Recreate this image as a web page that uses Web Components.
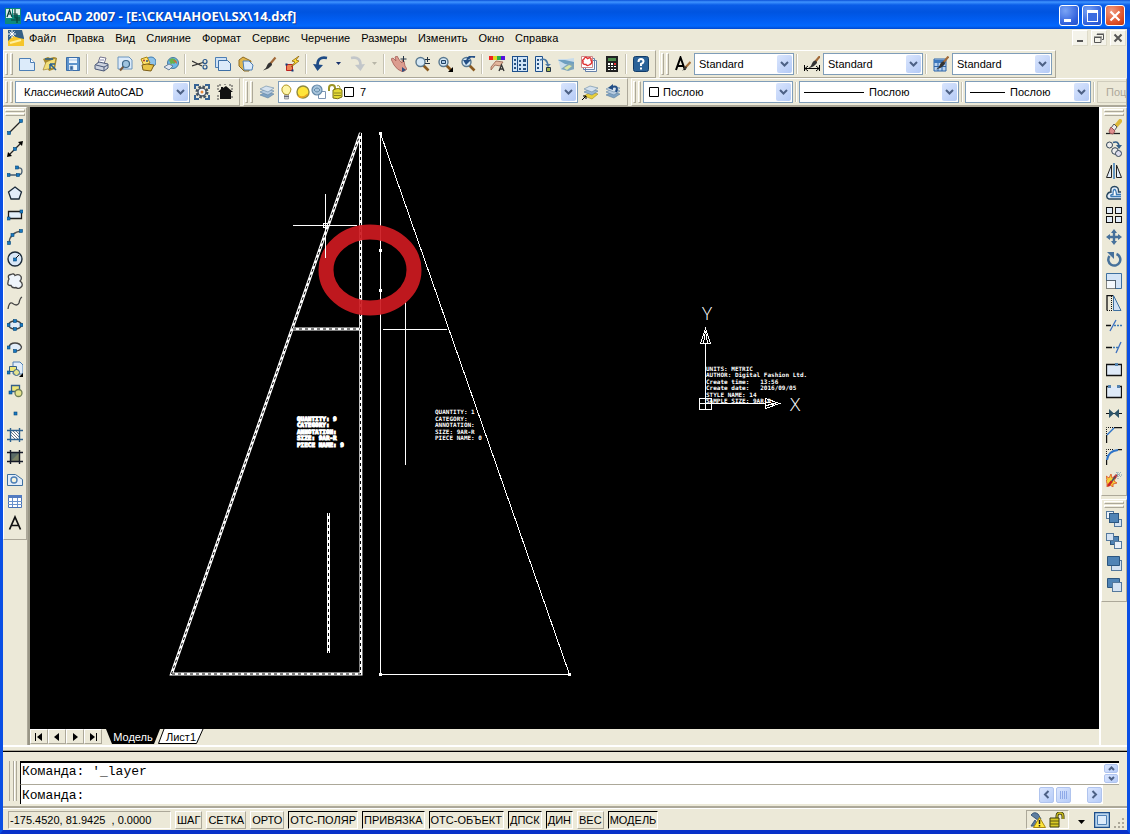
<!DOCTYPE html>
<html lang="ru">
<head>
<meta charset="utf-8">
<title>AutoCAD 2007 - [E:\СКАЧАНОЕ\LSX\14.dxf]</title>
<style>
  body { margin: 0; font: 11px/14px "Liberation Sans", Arial, sans-serif; color: #000; }
</style>
</head>
<body>
<cad-window></cad-window>
<script>
/* 16x16 icon artwork */
const dot = (x, y) => `<rect x="${x}" y="${y}" width="3" height="3" fill="#1878c0" stroke="#084878" stroke-width=".6"/>`;
const sq = (x, y, s, f, k) => `<rect x="${x}" y="${y}" width="${s}" height="${s}" fill="${f}" stroke="${k}"/>`;
const LENS = '<path d="M9 9l5.500 5.500" stroke="#8a5a20" stroke-width="2.600"/><circle cx="6.500" cy="6" r="4.500" fill="#d5e8f5" stroke="#59788f" stroke-width="1.400"/>';
const BRUSH = '<path d="M14.500 1.500L9 8" stroke="#a26a3a" stroke-width="2.200"/><path d="M9.500 6.500q2 1 1.500 2.500-3 4-9 5.500 4-3 4.500-6 1-2 3-2z" fill="#333"/>';
const LAYERS = '<path d="M1 11l6-3 8 2-6 4z" fill="#7fa3c4" stroke="#5c7fa0" stroke-width=".6"/><path d="M1 8l6-3 8 2-6 4z" fill="#b6cbe0" stroke="#5c7fa0" stroke-width=".6"/><path d="M1 5l6-3 8 2-6 4z" fill="#d5e2ee" stroke="#6586a4" stroke-width=".6"/>';
const GRID = (f) => `<path d="M3.500 1v14M12.500 1v14M0 3.500h16M0 12.500h16" stroke="${f}" stroke-width="1.400"/>`;
const ICONS = {
  app: '<path d="M0 0h16v16H0z" fill="#0d8a7c"/><path d="M1 1h6v9H1zM8 1h7v6H8z" fill="#fff" opacity=".85"/><path d="M2 9l2.500-7L7 9M3 6h3M10 1v9h5M8 6h4v7M6 12h9M12 9v6" stroke="#073f3a" stroke-width="1.200" fill="none"/>',
  doc: '<path d="M0 0h14l2 8v7H0z" fill="#335f86"/><path d="M0 11l5-5 6 2 5 1v7H0z" fill="#f5c52a"/><path d="M2 13l11-3" stroke="#fff0a0" stroke-width="2"/><path d="M4 0v8M0 4h8M1.500 1.500l5 5M6.500 1.500l-5 5" stroke="#fff"/>',
  new: '<path d="M.5 2.500h11l4 4v8h-15z" fill="#dcebfa" stroke="#4d7fb5"/><path d="M11.500 2.500v4h4" fill="#fff" stroke="#4d7fb5"/>',
  open: '<path d="M1 3l5-2 2 1 4-1 3 1-2 11-6 2z" fill="#a78a2b"/><path d="M1 14L4 6l10-4-2 10z" fill="#f2df79" stroke="#94762a" stroke-width=".6"/><path d="M3 3h8M8 8l6 6M8 8h5M8 8v5" stroke="#286090" stroke-width="1.500" fill="none"/>',
  save: '<path d="M1.500 1.500h13v13h-13z" fill="#5e94cd" stroke="#3c6ea8"/><path d="M4 2h8v5H4zM4 9h8v5H4z" fill="#eef5fc"/><path d="M4 4h8M5 10h3v4H5z" fill="#38669c" stroke="#8cb2dc" stroke-width=".7"/>',
  print: '<path d="M4 7l2-6 6 1-2 6z" fill="#fff" stroke="#557" stroke-width=".8"/><path d="M1 9l4-3 9 2v4l-4 3-9-2z" fill="#cdd3de" stroke="#4a5878"/><path d="M2 9l8 2 4-2M10 11v4" stroke="#4a5878" fill="none"/><path d="M6 4h4" stroke="#88a"/>',
  preview: '<path d="M1 1h11l3 3v9H1z" fill="#dcebfa" stroke="#6b94bd"/><path d="M7 10l-4 4.500" stroke="#7c5a3a" stroke-width="2"/><circle cx="9" cy="8" r="3.500" fill="#9fc4e0" stroke="#3d6788" stroke-width="1.200"/>',
  publish: '<circle cx="11" cy="6" r="5" fill="#8fc3ea" stroke="#3c7bb0"/><path d="M1 3l6-2 3 6-6 3z" fill="#ffe36b" stroke="#a98312"/><path d="M2 9l5-1 7 1-3 6-8-1z" fill="#e8c447" stroke="#7b5d16"/><circle cx="4" cy="4.500" r="1" fill="#a33"/><circle cx="7" cy="5" r="1" fill="#357"/>',
  web: '<circle cx="10" cy="7" r="5.500" fill="#6db7e6" stroke="#477aa2"/><path d="M6 4q4-4 8 1l-3 3q-2-2-3 1z" fill="#6ab04a"/><path d="M10 4q4 0 4 4l-2-2z" fill="#e05a3a"/><path d="M1 11l5-3 4 2-4 4z" fill="#dfe5ee" stroke="#67809b"/>',
  cut: '<path d="M0 5l10 5M0 10L11 6.500" stroke="#333" stroke-width="1.200"/><circle cx="13" cy="5.500" r="2" fill="none" stroke="#27558c" stroke-width="1.200"/><circle cx="13" cy="11" r="2" fill="none" stroke="#27558c" stroke-width="1.200"/>',
  copy: '<path d="M.5 1.500h11v10H.5z" fill="#cfe2f5" stroke="#4d7fb5"/><path d="M3.500 4.500h9l3 3v7h-12z" fill="#dcebfa" stroke="#3d6fa5"/>',
  paste: '<path d="M1 4l4-3 8 4-2 10-5 0-5-5z" fill="#e1b64c" stroke="#8e6a20"/><path d="M5 5h6l4 4-1 5H6z" fill="#dcebfa" stroke="#4d7fb5"/>',
  brush: BRUSH,
  block: '<path d="M2.500 8.500h6v6h-6z" fill="#ee8450" stroke="#b22"/><path d="M1.500 7.500h2v2h-2zM7.500 13.500h2v2h-2z" fill="#123a7a"/><path d="M15 0L8 5l3 1-4 5 8-6-3-1z" fill="#ffe033" stroke="#91650c" stroke-width=".8"/>',
  undo: '<path d="M14 2Q4 0 4.500 10" fill="none" stroke="#1e4b85" stroke-width="2.600"/><path d="M0 8l4.500 7L10 9z" fill="#1e4b85"/>',
  redo: '<path d="M2 2q10-2 9.500 8" fill="none" stroke="#c2c6c9" stroke-width="2.600"/><path d="M16 8l-4.500 7L6 9z" fill="#c2c6c9"/>',
  pan: '<path d="M0 3l2-1 3 3-1-4 2-1 3 5 2 2v-3l2 1 1 5 2 3-4 3q-6-2-9-7z" fill="#dc9c8f" stroke="#a35c54" stroke-width=".8"/><path d="M11 11l4 3-4 2z" fill="#304f80"/><path d="M12.500 0v6M9.500 3h6" stroke="#234"/>',
  zoom: LENS + '<path d="M13.500 1v5M11 3.500h5M11 7.500h5" stroke="#234"/>',
  zoomwin: LENS + '<path d="M4.500 4.500h4v3h-4z" fill="#aecce8" stroke="#246"/><path d="M16 11v5h-5z"/>',
  zoomprev: LENS + '<path d="M15 1Q8-1 7 5" stroke="#234f86" stroke-width="2" fill="none"/><path d="M3 4h8L6 9z" fill="#234f86"/>',
  props: '<path d="M0 0h4v4H0z" fill="#e22"/><path d="M4 0h4v4H4z" fill="#e0d622"/><path d="M8 0h4v4H8z" fill="#2bb04a"/><path d="M12 0h4v4h-4z" fill="#51d"/><path d="M2 11l5-6 7 1-3 4-5-1-4 5z" fill="#e3b79e" stroke="#955f4c" stroke-width=".8"/><path d="M10 15l2.500-6L15 15M11 13h3" stroke="#333" stroke-width="1.300" fill="none"/>',
  dc: '<rect x=".5" y=".5" width="15" height="15" fill="#cfe3f6" stroke="#1d4f8b"/><path d="M5.500 1v14" stroke="#1d4f8b"/><path d="M7 4h2v2H7zM11 3h3v3h-3zM7 8h2v2H7zM11 8h3v2h-3zM7 12h2v2H7zM11 12h3v2h-3zM2 3h2v2H2zM2 7h2v2H2zM2 11h2v2H2z" fill="#28517f"/>',
  palette: '<path d="M.5 .5h7v15h-7z" fill="#dcebfa" stroke="#1d4f8b"/><path d="M2 3h2v2H2zM2 7h2v2H2zM2 11h2v2H2z" fill="#28517f"/><path d="M5 4q7-3 8 6" fill="none" stroke="#4b79a5" stroke-width="1.600"/><path d="M10 8h6l-3 3z" fill="#4b79a5"/><path d="M11.500 11.500h4v4h-4z" fill="#9fb24f" stroke="#234"/>',
  sheet: '<path d="M0 3h9l7-1v12H3z" fill="#c8dcea"/><path d="M0 4h7l9 2v3L7 8z" fill="#6d9fc0"/><path d="M3 13l8-6 5 1v5l-6 2z" fill="#80a6b8"/><path d="M6 12l5-3 3 1-5 4z" fill="#dbe7a4"/>',
  markup: '<path d="M4.500 4.500h11v11h-11zM2.500 2.500h11v11h-11z" fill="#f6fbff" stroke="#6580a8"/><path d="M.5 .5h11v11H.5z" fill="#fff" stroke="#c88"/><path d="M3 3q1-3 3.500-.5 4-2 3.500 1.500 2 3-1 4.500-3 2-4 0-4 0-3-3-1-1 1-2.500z" fill="none" stroke="#e03030" stroke-width="1.500"/>',
  calc: '<path d="M2 0h12v16H2z" fill="#222"/><path d="M4 2h8v3H4z" fill="#4c8c4c"/><path d="M10 7h2v2h-2z" fill="#e33"/><path d="M4 7h2v2H4zM7 7h2v2H7zM4 10h2v1H4zM7 10h2v1H7zM10 10h2v1h-2zM4 13h2v1H4zM7 13h2v1H7zM10 13h2v1h-2z" fill="#fff"/>',
  help: '<rect x=".5" y=".5" width="15" height="15" rx="2" fill="#2b6298" stroke="#123c68"/><path d="M5.500 6q0-3 2.500-3t2.500 2.500Q10.500 7 8 8v2M8 11.500v2" fill="none" stroke="#fff" stroke-width="2"/>',
  tstyle: '<path d="M1 14L5.500 1.500 10 14M2.500 10h6" fill="none" stroke="#000" stroke-width="2"/><path d="M15.500 6L10 12" stroke="#a5713c" stroke-width="2.200"/><path d="M11 10l1 2-5 3z" fill="#333"/>',
  dstyle: '<path d="M.5 9v6M15.500 9v6M1 12.500h14M4 10l-3 2.500L4 15M12 10l3 2.500-3 2.500" fill="none" stroke="#000"/><g transform="translate(2 -2)">' + BRUSH + '</g>',
  tabstyle: '<path d="M1 3h12v12H1z" fill="#b8d2f0" stroke="#2d64a8"/><path d="M1 4h12v3H1z" fill="#3c78be"/><path d="M1 10.500h12M5 7v8M9 7v8" stroke="#2d64a8"/><g transform="translate(1 -1)">' + BRUSH + '</g>',
  gear: '<path d="M0 0h5v2H2v3H0zM11 0h5v5h-2V2h-3zM0 11h2v3h3v2H0zM14 11h2v5h-5v-2h3z" fill="#386494"/><circle cx="8" cy="8" r="5" fill="none" stroke="#45525f" stroke-width="3" stroke-dasharray="2.400 1.500"/><circle cx="8" cy="8" r="4" fill="#eef3f8" stroke="#45525f" stroke-width="1.400"/><circle cx="8" cy="8" r="1.500" fill="#e8893a"/>',
  home: '<path d="M1 8l3-3V3h2v1l3-2 7 6h-2v7H3V8z" fill="#111"/><path d="M0 2h2M0 5h2M0 12h2M0 15h2M14 2h2M14 5h2M14 13h2M3 0v2M8 0v1M13 0v2" stroke="#444"/>',
  layers: LAYERS,
  layerset: '<path d="M2 12l7-4 7 2-6 5z" fill="#e8cf3a" stroke="#a68d14" stroke-width=".6"/><path d="M2 8l6-3 8 2-6 4z" fill="#9bb8d4" stroke="#5c7fa0" stroke-width=".6"/><path d="M2 5l6-3 8 2-6 4z" fill="#d5e2ee" stroke="#6586a4" stroke-width=".6"/><path d="M0 16l4-4M1 12h3v3" stroke="#000" fill="none"/>',
  layerprev: LAYERS + '<path d="M11 8q3-7-4-5" stroke="#234f86" stroke-width="2" fill="none"/><path d="M8 0v6L3 4z" fill="#234f86"/>',
  bulb: '<path d="M5 10Q2 7 3 4q2-4 5-3t4 4q0 3-3 6z" fill="#fff6a6" stroke="#b29626"/><path d="M5.500 11h4v4h-4z" fill="#c9ccd2" stroke="#777" stroke-width=".6"/><path d="M5 12.500h5" stroke="#667"/>',
  sun: '<circle cx="8" cy="8" r="6" fill="#ffe53a" stroke="#8f8a3f" stroke-width="1.400"/><path d="M3 12q5 3 10-2" fill="none" stroke="#e8a51f" stroke-width="1.500"/>',
  vpfreeze: '<path d="M7.500 7.500h7v7h-7z" fill="#fff" stroke="#7d95b3"/><circle cx="6" cy="6" r="5" fill="#a7c4dc" stroke="#6489a8" stroke-width="1.200"/><path d="M3 6q3-4 6 0-3 4-6 0z" stroke="#557f9e" stroke-width=".8" fill="none"/>',
  lock: '<path d="M2 7V4q0-3 3-3t3 3v3" fill="none" stroke="#9c9424" stroke-width="2"/><path d="M6 6q6-3 9 0v7q-4 3-9 1z" fill="#e4da36" stroke="#777015"/><path d="M7 9h7M7 11.500h7" stroke="#8c8420"/><path d="M10 2q3-2 3 4" fill="none" stroke="#9c9424"/>',
  swatch: '<path d="M1.500 3.500h9v9h-9z" fill="#fff" stroke="#000"/>',
  line: '<path d="M2 14L14 2" stroke="#222" stroke-width="1.300"/>' + dot(.5, 12.500) + dot(12.500, .5),
  xline: '<path d="M2 14L14 2" stroke="#222" stroke-width="1.300"/><path d="M0 16l1-5 4 4zM16 0l-5 1 4 4z"/>' + dot(6.500, 6.500),
  pline: '<path d="M1 12h10q4 0 4-4t-5-3" fill="none" stroke="#445b70" stroke-width="1.300"/>' + dot(0, 10.500) + dot(9.500, 10.500) + dot(8.500, 3),
  polygon: '<path d="M8 2l6.500 5-2.500 7H4L1.500 7z" fill="#e2edf9" stroke="#1c2b3a" stroke-width="1.300"/>',
  rect: '<path d="M1.500 4.500h13v7h-13z" fill="#e2edf9" stroke="#1c1c1c" stroke-width="1.300"/>' + dot(0, 10) + dot(13, 3),
  arc: '<path d="M2 14Q3 3 15 2" fill="none" stroke="#555" stroke-width="1.300"/>' + dot(.5, 12.500) + dot(4, 4.500) + dot(12.500, .5),
  circle: '<circle cx="8" cy="8" r="7" fill="#d8e7f7" stroke="#1c2b3a" stroke-width="1.400"/><path d="M8 8l4-4" stroke="#111"/>' + dot(6.500, 7),
  cloud: '<path d="M2 6Q0 2 4 1.500 7 0 8 2.500q4-2 6 1 1 3-1 4.500 3 2 2 5-3 4-6 1.500-4 1-5-2-4 0-3-3 0-2 1-3.500z" fill="#eff5fb" stroke="#444" stroke-width="1.300"/>',
  spline: '<path d="M1 14q1-7 4-6 5 4 7 0 1-5 3-6" fill="none" stroke="#444" stroke-width="1.300"/>',
  ellipse: '<ellipse cx="8" cy="8" rx="6.500" ry="4" fill="#e2edf9" stroke="#444" stroke-width="1.300"/>' + dot(0, 6.500) + dot(13, 6.500) + dot(6.500, 2.500) + dot(6.500, 10.500),
  earc: '<path d="M2 8q1-4 6-4t6.500 4Q14 12 8 12" fill="#e2edf9" stroke="#444" stroke-width="1.300"/>' + dot(0, 7) + dot(6.500, 10.500),
  insert: '<path d="M6 1h7l3 3v9H6z" fill="#e2edf9" stroke="#4d7fb5"/><path d="M2.500 5.500h7v5h-7z" fill="#eee678" stroke="#355f88"/><circle cx="9.500" cy="11.500" r="3" fill="#e4e28c" stroke="#355f88"/>' + dot(0, 10) + '<path d="M16 12v4h-4z"/>',
  mkblock: '<path d="M4.500 2.500h8v6h-8z" fill="#eee678" stroke="#355f88" stroke-width="1.300"/><circle cx="11.500" cy="10" r="3.500" fill="#e4e28c" stroke="#6f7e55" stroke-width="1.300"/>' + dot(2, 8),
  point: dot(7, 7),
  hatch: '<path d="M4 4h8v8H4z" fill="#fff"/><path d="M4 5l7 7M4 8l4 4M6 4l6 6M9 4l3 3" stroke="#456" stroke-width=".8"/>' + GRID('#2c618f'),
  gradient: '<path d="M4 4h8v8H4z" fill="#5a6a66"/><path d="M4 12l8-8v8z" fill="#7c8265"/>' + GRID('#151a28'),
  region: '<path d="M.5 3.500h8l7 5v6H.5z" fill="#e2edf9" stroke="#3d6f9f"/><circle cx="7" cy="9" r="3" fill="#f5f3dd" stroke="#4d7fb5" stroke-width="1.400"/>',
  table: '<path d="M1.500 2.500h13v12h-13z" fill="#fff" stroke="#4a73b5"/><path d="M1 2h14v3H1z" fill="#527bc0"/><path d="M1 8.500h14M1 11.500h14M5.500 5v9M10.500 5v9" stroke="#6a92cc"/>',
  mtext: '<path d="M2.500 14.500L8 2l5.500 12.500M4.500 10.500h7" fill="none" stroke="#111" stroke-width="1.700"/>',
  erase: '<path d="M0 14.500h14" stroke="#222" stroke-width="1.300"/><path d="M15.500 .5L10 7" stroke="#dcb83a" stroke-width="4"/><path d="M5 9l3-4 3 3-3 4z" fill="#eee" stroke="#555"/><path d="M3 12l2-4 4 4-2 3q-4 0-4-3z" fill="#e08e8e" stroke="#955"/>',
  dup: '<circle cx="3.500" cy="4" r="3" fill="#eee" stroke="#345"/><circle cx="9" cy="10" r="3.300" fill="#eee" stroke="#345"/><circle cx="12.500" cy="12.500" r="3" fill="#dde" stroke="#345"/><path d="M7 1.500q5-2 6 3" fill="none" stroke="#345f88" stroke-width="1.600"/><path d="M10 4h6l-3 4z" fill="#345f88"/>',
  mirror: '<path d="M5.500 2v12.500h-5zM10.500 2v12.500h5z" fill="#e2edf9" stroke="#222"/><path d="M8 0v16" stroke="#2e74b8" stroke-width="1.400"/>',
  offset: '<path d="M15 14H3q-3-1-2-4t4-3Q4 1.500 8.500 1.500T12.500 7H15" fill="#e2edf9" stroke="#27465f" stroke-width="1.400"/><path d="M15 11.500H5q-1-2 2-2 0-5 1.500-5T10.500 9.500H15" fill="#fff" stroke="#3b7ab5" stroke-width="1.300"/>',
  array: sq(.5, .5, 6, '#e2edf9', '#111') + sq(9.500, .5, 6, '#e2edf9', '#111') + sq(.5, 9.500, 6, '#e2edf9', '#111') + sq(9.500, 9.500, 6, '#e2edf9', '#111'),
  move: '<path d="M8 2v12M2 8h12" stroke="#47719b" stroke-width="2.400"/><path d="M8 0l3 4H5zM8 16l3-4H5zM0 8l4-3v6zM16 8l-4-3v6z" fill="#47719b"/>',
  rotate: '<path d="M10.500 3a6 6 0 1 1-7 2" fill="none" stroke="#47719b" stroke-width="2.500"/><path d="M1 1h7v7z" fill="#47719b"/>',
  scale: '<path d="M.5 .5h15v15H9.500v-8h-9z" fill="#d4e4f6" stroke="#3d6f9f"/><path d="M.5 7.500h9v8h-9z" fill="#f4f8fc" stroke="#111" stroke-dasharray="1 1"/>',
  stretch: '<path d="M7.500 .5l7.500 15H7.500z" fill="#cfe0f4" stroke="#3d6f9f"/><path d="M1 15.500V.5h6" fill="none" stroke="#111" stroke-width="1.300"/><path d="M5.500 1v14M1 15.500h6" stroke="#111" stroke-dasharray="1 1"/>',
  trim: '<path d="M0 8.500h5" stroke="#111" stroke-width="1.500"/><path d="M8 8.500h8" stroke="#3b7ab5" stroke-dasharray="2 1" stroke-width="1.300"/><path d="M4 14L10 3" stroke="#3b6fc0" stroke-width="1.300"/>',
  extend: '<path d="M0 8.500h6" stroke="#111" stroke-width="1.500"/><path d="M7 8.500h5" stroke="#3b7ab5" stroke-dasharray="2 1" stroke-width="1.300"/><path d="M10 14l5-11" stroke="#3b6fc0" stroke-width="1.300"/>',
  breakpt: '<path d="M.5 3.500h15v11H.5z" fill="#dfeaf8" stroke="#111" stroke-width="1.300"/><path d="M9 2h3v3H9z" fill="#5584b0"/>',
  break: '<path d="M3 3.500H.5v11h15v-11H13" fill="#dfeaf8" stroke="#111" stroke-width="1.300"/><path d="M2 2h3v3H2zM11 2h3v3h-3z" fill="#5584b0"/>',
  join: '<path d="M0 8.500h16" stroke="#111"/><path d="M3 4l5 4.500L3 13zM13 4L8 8.500l5 4.500z" fill="#2d5468"/>',
  chamfer: '<path d="M.5 7V.5H8" fill="none" stroke="#111" stroke-dasharray="1 1"/><path d="M.5 16V8M8 .5h8" stroke="#111" stroke-width="1.400"/><path d="M1 8l7-7" stroke="#2e74c8" stroke-width="1.500"/>',
  fillet: '<path d="M.5 7V.5H8" fill="none" stroke="#111" stroke-dasharray="1 1"/><path d="M.5 16v-5M12 .5h4" stroke="#111" stroke-width="1.400"/><path d="M1 11Q2 2 12 1" fill="none" stroke="#2e74c8" stroke-width="2"/>',
  explode: '<path d="M0 5l3 2 2-4 1 4 4-1-2 4 3 2-4 1 0 3-3-2-3 2v-4l-1-2 1-1z" fill="#f4d13b" stroke="#d84a22" stroke-width=".8"/><path d="M2 15l4-5M8 7l3-3" stroke="#c22" stroke-width="2.600"/><path d="M6 10l3-4" stroke="#456" stroke-width="1.500"/><path d="M12 1v7M9 4h7M10 1l5 5M15 1l-5 5" stroke="#79a" stroke-dasharray="1 1"/>',
  front: sq(.5, .5, 7, '#eef4fb', '#54789c') + sq(8.500, 8.500, 7, '#d4e2f2', '#54789c') + sq(3.500, 2.500, 9, '#4f83b5', '#2c5680'),
  back: sq(4.500, 3.500, 8, '#4f83b5', '#2c5680') + sq(.5, .5, 7, '#d4e2f2', '#54789c') + sq(8.500, 8.500, 7, '#e8eff8', '#54789c'),
  above: sq(5.500, 5.500, 10, '#d4e2f2', '#54789c') + '<path d="M1.500 1.500h12v9h-12z" fill="#4f83b5" stroke="#2c5680"/>',
  under: '<path d="M1.500 1.500h12v9h-12z" fill="#4f83b5" stroke="#2c5680"/>' + sq(6.500, 5.500, 9, '#d4e2f2', '#54789c'),
  comm: '<path d="M1 3q3-4 7-1l3 5q-4 2-6-1zM5 8l-4 6h8z" fill="#5d7d9f" stroke="#3b5878"/><path d="M9.500 5.500l6 10h-12z" fill="#ffe638" stroke="#a98710"/><path d="M9.500 8v4M9.500 13v1.500" stroke="#222" stroke-width="1.500"/>',
  unlock: '<path d="M8 7V4q0-3 3-3t3 3v3" fill="none" stroke="#3a3a10" stroke-width="3"/><path d="M8 7V4q0-3 3-3t3 3v3" fill="none" stroke="#cfc020" stroke-width="1.300"/><path d="M1 6h9v9H1z" fill="#d9cb25" stroke="#3a3a10"/><path d="M1 9h9M1 12h9" stroke="#5c5610"/>',
  clean: '<path d="M.5 .5h15v15H.5z" fill="#b9d5ee" stroke="#1d4f8b" stroke-width="1.500"/><path d="M3.500 3.500h9v9h-9z" fill="#dcebfa" stroke="#4d7fb5"/>'
};

const CHEVRON = '<svg width="9" height="7" viewBox="0 0 9 7" aria-hidden="true"><path d="M1 1l3.500 3.500L8 1" fill="none" stroke="#4d6185" stroke-width="2"/></svg>';

class Part extends HTMLElement {
  connectedCallback() {
    if (this.shadowRoot) return;
    const t = document.createElement('template');
    t.innerHTML = '<style>*{box-sizing:border-box}</style>' + this.view();
    this.attachShadow({ mode: 'open' }).append(t.content.cloneNode(true));
  }
  at(name, other = '') { return this.getAttribute(name) ?? other; }
}
const define = (name, view) => customElements.define(name, class extends Part { view() { return view(this); } });

define('cad-icon', el => `
<style>:host{display:block;flex:none;width:16px;height:16px} svg{display:block}</style>
<svg width="16" height="16" viewBox="0 0 16 16" aria-hidden="true">${ICONS[el.at('name')]}</svg>`);

define('cad-tool', el => `
<style>
:host{display:block;flex:none}
button{display:grid;place-items:center;width:23px;height:22px;padding:0;border:0;background:none}
</style>
<button type="button" aria-label="${el.at('name')}"><cad-icon name="${el.at('name')}"></cad-icon></button>`);

define('cad-drop', el => `
<style>
:host{display:block;flex:none}
button{display:grid;place-items:center;width:13px;height:22px;padding:0 4px 2px;border:0;background:none;color:${el.at('tone', '#16306b')}}
</style>
<button type="button" aria-label="История"><svg width="5" height="3" viewBox="0 0 5 3"><path d="M0 0h5L2.500 3z" fill="currentColor"/></svg></button>`);

define('cad-sep', () => `
<style>:host{display:block;flex:none;width:2px;height:20px;margin:0 2px;border-left:1px solid #c5c2b2;border-right:1px solid #fff}</style>`);

/* A dockable toolbar: grip first, then whatever is slotted in. */
define('cad-band', el => {
  const v = el.hasAttribute('vertical');
  return `
<style>
:host{display:flex;flex:${el.hasAttribute('grow') ? '1' : 'none'};min-width:0;align-items:center;flex-direction:${v ? 'column' : 'row'};
 border:solid;border-width:1px;border-color:#fff #aca899 #aca899 #fff;padding:${v ? '0 0 5px' : el.hasAttribute('grow') ? '0' : '0 3px 0 0'};${v ? '' : 'height:28px;'}}
i{flex:none;display:block;${v ? 'width:20px;height:3px;margin:1px 0 0' : 'width:3px;height:22px;margin:0 1px'};border:1px solid;border-color:#fff #aca899 #aca899 #fff}
${v ? '' : 'i + i{margin-right:2px}'}
</style><i></i><i></i><slot></slot>`;
});

define('cad-select', el => `
<style>
:host{display:grid;flex:none;width:${el.at('w')}px;height:22px;border:1px solid #7f9db9;background:#fff;align-items:center}
select{grid-area:1/1;width:100%;height:20px;margin:0;padding:0 20px 0 ${el.at('pad', 4)}px;border:0;background:none;appearance:none;font:11px/14px "Liberation Sans",Arial,sans-serif;color:#000;border-radius:0}
.lead{grid-area:1/1;justify-self:start;display:flex;align-items:center;pointer-events:none}
.arrow{grid-area:1/1;justify-self:end;display:grid;place-items:center;width:15px;height:18px;margin-right:1px;pointer-events:none;border-radius:2px;background:linear-gradient(135deg,#d9e5fd,#b4caf6)}
</style>
<span class="lead"><slot></slot></span>
<select aria-label="${el.at('label')}"><option>${el.at('value')}</option></select>
<span class="arrow">${CHEVRON}</span>`);

define('cad-rule', el => `
<style>:host{display:block;width:${el.at('w')}px;height:1px;margin-left:4px;background:#000}</style>`);

define('cad-title', () => `
<style>
:host{display:flex;align-items:center;gap:3px;height:29px;padding:2px 5px 0 5px;
 background:linear-gradient(#0a50d8 0,#3f94ff 2px,#0a5de8 5px,#0054e0 12px,#0160f6 22px,#0268fd 26px,#0048cf 29px)}
h1{flex:1;min-width:0;margin:0;overflow:hidden;white-space:nowrap;color:#fff;font:bold 13px/18px "Open Sans","Noto Sans",sans-serif;text-shadow:1px 1px 0 #0b3a9a}
.buttons{display:flex;gap:3px}
button{display:grid;place-items:center;width:20px;height:21px;padding:0;border:1px solid #fff;border-radius:3px;background:radial-gradient(circle at 30% 25%,#7aa4f5,#3060dc 70%,#2450c8)}
button.close{background:radial-gradient(circle at 30% 25%,#f09a80,#dd4c22 70%,#b83410)}
</style>
<cad-icon name="app"></cad-icon>
<h1>AutoCAD 2007 - [E:\\СКАЧАНОЕ\\LSX\\14.dxf]</h1>
<div class="buttons">
<button type="button" aria-label="Свернуть"><svg width="14" height="14"><path d="M2 10h7v3H2z" fill="#fff"/></svg></button>
<button type="button" aria-label="Развернуть"><svg width="14" height="14"><path d="M2 1h11v12H2z" fill="#fff"/><path d="M3 4h9v8H3z" fill="#3c6ce0"/></svg></button>
<button type="button" class="close" aria-label="Закрыть"><svg width="14" height="14"><path d="M2.500 2.500l9 9M11.500 2.500l-9 9" stroke="#fff" stroke-width="2.200"/></svg></button>
</div>`);

define('cad-menu', () => `
<style>
:host{display:flex;align-items:center;height:21px;box-sizing:border-box;padding:0 1px 3px 5px;background:#ece9d8}
nav{display:flex;flex:1;min-width:0;overflow:hidden;gap:11px;padding-left:5px}
nav a{color:#000;text-decoration:none;white-space:nowrap;line-height:16px}
.mdi{display:flex;gap:3px}
button{display:grid;place-items:center;width:16px;height:16px;padding:0;border:1px solid;border-color:#fff #dedbc9 #dedbc9 #fff;background:#f4f3ea}
</style>
<cad-icon name="doc"></cad-icon>
<nav>${['Файл', 'Правка', 'Вид', 'Слияние', 'Формат', 'Сервис', 'Черчение', 'Размеры', 'Изменить', 'Окно', 'Справка'].map(t => `<a href="#">${t}</a>`).join('')}</nav>
<div class="mdi">
<button type="button" aria-label="Свернуть чертеж"><svg width="10" height="10"><path d="M2 7h6v2H2z" fill="#555"/></svg></button>
<button type="button" aria-label="Восстановить чертеж"><svg width="10" height="10" fill="none" stroke="#555"><path d="M3 2V1.500h6.500v5H8M3 1h7" /><path d="M.5 4.500H7v5H.5zM0 4h8"/></svg></button>
<button type="button" aria-label="Закрыть чертеж"><svg width="10" height="10"><path d="M1.500 1.500l7 7M8.500 1.500l-7 7" stroke="#555" stroke-width="2"/></svg></button>
</div>`);

const tools = s => s.split(' ').map(n => n === '|' ? '<cad-sep></cad-sep>' : n === 'v' ? '<cad-drop></cad-drop>' : n === 'w' ? '<cad-drop tone="#b8b6a8"></cad-drop>' : `<cad-tool name="${n}"></cad-tool>`).join('');

define('cad-toolbars', () => `
<style>
:host{display:block;background:#ece9d8;overflow:hidden}
.row{display:flex;overflow:hidden;gap:3px}
.color{flex:1 0 auto;height:22px;padding:0 0 0 8px;border:1px solid #d0cdbd;border-right:0;background:#ece9d8;color:#aca899;font:11px/14px "Liberation Sans",Arial,sans-serif;text-align:left}
</style>
<div class="row">
<cad-band>${tools('new open save | print preview publish web | cut copy paste brush block | undo v redo w | pan zoom zoomwin zoomprev | props dc palette sheet markup calc | help')}</cad-band>
<cad-band>${tools('tstyle')}<cad-select w="100" label="Текстовый стиль" value="Standard"></cad-select>
${tools('| dstyle')}<cad-select w="100" label="Размерный стиль" value="Standard"></cad-select>
${tools('| tabstyle')}<cad-select w="100" label="Стиль таблиц" value="Standard"></cad-select></cad-band>
</div>
<div class="row">
<cad-band><cad-select w="175" pad="8" label="Рабочее пространство" value="Классический AutoCAD"></cad-select>${tools('gear home')}</cad-band>
<cad-band>${tools('layers')}<cad-select w="300" pad="81" label="Слой" value="7"><cad-icon name="bulb"></cad-icon><cad-icon name="sun"></cad-icon><cad-icon name="vpfreeze"></cad-icon><cad-icon name="lock"></cad-icon><cad-icon name="swatch"></cad-icon></cad-select>${tools('layerset layerprev')}</cad-band>
<cad-band grow><cad-select w="150" pad="19" label="Цвет" value="Послою"><cad-icon name="swatch" style="margin-left:4px"></cad-icon></cad-select><cad-sep></cad-sep>
<cad-select w="160" pad="69" label="Тип линий" value="Послою"><cad-rule w="60"></cad-rule></cad-select><cad-sep></cad-sep>
<cad-select w="126" pad="44" label="Вес линий" value="Послою"><cad-rule w="35"></cad-rule></cad-select><cad-sep></cad-sep>
<button type="button" class="color" disabled>Поц</button></cad-band>
</div>`);

define('cad-drawing', () => {
  const lines = (x, ys, rows) => rows.map((t, i) => `<text x="${x}" y="${ys[i]}">${t}</text>`).join('');
  return `
<style>
:host{display:block;flex:1;min-width:0;background:#000;overflow:hidden;position:relative}
svg{position:absolute;inset:0;width:100%;height:100%}
.thin{fill:none;stroke:#fff;shape-rendering:crispEdges}
.fat{fill:none;stroke:#fff;stroke-width:3}
.dash{fill:none;stroke:#000;stroke-dasharray:3 3}
text{font:bold 6px "DejaVu Sans Mono","Liberation Mono",monospace;fill:#fff;white-space:pre}
.picked text{stroke:#fff;stroke-width:1px}
.axis{font:300 19px "Open Sans","Noto Sans",sans-serif}
</style>
<svg role="img" aria-label="Чертеж 14.dxf"><g transform="translate(-30 -107)">
<g class="fat"><path d="M360.500 133L171.500 674H361z"/><path d="M293 329h67M328.500 513v140"/></g>
<g class="dash"><path d="M360.500 133v541M360.500 133L171.500 674M172 674h189M293 329h67M328.500 513v140"/></g>
<g class="thin">
<path d="M380.500 133.500v541h189zM383 329.500h64M405.500 300v165"/>
<path d="M379.500 132.500h2v2h-2zM379.500 249.500h2v2h-2zM379.500 289.500h2v2h-2zM379.500 673.500h2v2h-2zM568.500 673.500h2v2h-2z"/>
<path d="M699.500 398.500h12v11h-12zM705.500 410v-67M699 403.500h67M700.500 343.500h10l-5-15zM703.500 343l2-12 2 12M765.500 398.500v10l14-5zM766 402.500l10 1-10 2"/>
</g>
<g class="picked">${lines(297, [421, 427, 434, 440, 447], ['QUANTITY: 9', 'CATEGORY:', 'ANNOTATION:', 'SIZE: 9AR-R', 'PIECE NAME: 9'])}</g>
<g>${lines(435, [414, 421, 427, 434, 440], ['QUANTITY: 1', 'CATEGORY:', 'ANNOTATION:', 'SIZE: 9AR-R', 'PIECE NAME: 0'])}
${lines(706, [371, 377, 384, 390, 397, 403], ['UNITS: METRIC', 'AUTHOR: Digital Fashion Ltd.', 'Create time:   13:56', 'Create date:   2016/09/05', 'STYLE NAME: 14', 'SAMPLE SIZE: 9AR-R'])}</g>
<text class="axis" x="702" y="320">Y</text><text class="axis" x="790" y="411">X</text>
<ellipse cx="370" cy="270" rx="44" ry="38" fill="none" stroke="#cc1a20" stroke-opacity=".93" stroke-width="15"/>
<path class="thin" d="M325.500 194v64M293 225.500h64M323.500 223.500h4v4h-4z"/>
</g></svg>`;
});

define('cad-tabs', () => `
<style>
:host{display:flex;height:16px;background:#ece9d8;overflow:hidden}
.nav{display:grid;place-items:center;width:18px;height:15px;padding:0;border:1px solid;border-color:#fff #aca899 #aca899 #fff;background:#ece9d8}
.tab{display:grid;place-items:center;height:16px;padding:0;border:0;background:none;font:11px/14px "Liberation Sans",Arial,sans-serif;color:#000}
.tab svg,.tab span{grid-area:1/1}
.tab.on{color:#fff;margin-left:4px}
.tab + .tab{margin-left:-2px}
</style>
${['M1 0h1v8H1zM8 0v8L3 4z', 'M7 0v8L2 4z', 'M3 0v8l5-4z', 'M2 0v8l5-4zM8 0h1v8H8z'].map((d, i) => `<button type="button" class="nav" aria-label="Лист ${i + 1}"><svg width="10" height="8"><path d="${d}"/></svg></button>`).join('')}
<button type="button" class="tab on"><svg width="54" height="16"><path d="M0 0h54l-6 15H6z"/></svg><span>Модель</span></button>
<button type="button" class="tab"><svg width="46" height="16"><path d="M6 0L.5 14.500h38L45 0" fill="#fff" stroke="#000"/></svg><span>Лист1</span></button>`);

define('cad-command', () => `
<style>
:host{display:flex;gap:3px;padding:9px 8px 2px 6px;border-top:1px solid #000;background:#ece9d8}
.grip{width:8px;margin-bottom:3px;border:solid #aca899;border-width:0 1px;background:linear-gradient(90deg,#ece9d8 3px,#aca899 3px 4px,#fff 4px 5px,#ece9d8 5px)}
.body{flex:1;min-width:0;font:13px/17px "Liberation Mono","Courier New",monospace}
.log{display:flex;justify-content:space-between;height:24px;border:solid #000;border-width:2px 0 0 1px;border-bottom:1px solid #aca899;background:#fff}
.log p{margin:0;padding:0 1px}
.line{display:flex;align-items:center;height:19px;margin-right:16px;border-left:1px solid #000;background:#fff}
label{padding:2px 1px 0}
input{flex:1;min-width:0;height:17px;padding:0;border:0;outline:0;background:none;font:inherit}
.v{display:grid;gap:1px;padding:1px}
.h{display:flex;gap:2px;align-items:center;padding:0 1px}
button{display:grid;place-items:center;padding:0;border:1px solid #b0c4ee;border-radius:2px;background:linear-gradient(135deg,#dbe6fe,#b6ccf8)}
.v button{width:14px;height:9px}
.h button{width:15px;height:16px}
.h .next{margin-left:14px}
svg{fill:none;stroke:#4d6185;stroke-width:2}
</style>
<div class="grip"></div>
<div class="body">
<div class="log"><p>Команда: '_layer</p><div class="v">
<button type="button" aria-label="Вверх"><svg width="7" height="5"><path d="M1 4l2.500-2.500L6 4"/></svg></button>
<button type="button" aria-label="Вниз"><svg width="7" height="5"><path d="M1 1l2.500 2.500L6 1"/></svg></button></div></div>
<div class="line"><label for="cmd">Команда:</label><input id="cmd" type="text" autocomplete="off"><div class="h">
<button type="button" aria-label="Влево"><svg width="7" height="9"><path d="M5.500 1L2 4.500 5.500 8"/></svg></button>
<button type="button" aria-label="Ползунок"><svg width="9" height="8"><path d="M1.500 0v8M3.500 0v8M5.500 0v8M7.500 0v8" stroke="#8faae8" stroke-width="1"/></svg></button>
<button type="button" class="next" aria-label="Вправо"><svg width="7" height="9"><path d="M1.500 1L5 4.500 1.500 8"/></svg></button></div></div>
</div>`);

define('cad-status', () => `
<style>
:host{display:flex;align-items:center;gap:4px;height:24px;padding:2px 2px 1px 5px;border-top:2px solid #aca899;box-shadow:inset 0 1px #fff;background:#ece9d8;overflow:hidden}
output,button{height:18px;flex:none;font:11px/15px "Liberation Sans",Arial,sans-serif;white-space:pre}
output{width:163px;padding:1px;border:1px solid;border-color:#aca899 #fff #fff #aca899}
button{padding:1px 1px 0;border:1px solid;border-color:#fff #aca899 #aca899 #fff;background:#ece9d8;color:#000}
button[aria-pressed=true]{border-color:#000 #fff #fff #000}
.tray{display:flex;align-items:center;gap:3px;height:19px;margin-left:auto;padding:0 3px;border:1px solid;border-color:#aca899 #fff #fff #aca899}
.arrow{width:17px;display:grid;place-items:center;border:0;padding:5px 0 0}
.size{align-self:end}
</style>
<output>-175.4520, 81.9425  , 0.0000</output>
${[['ШАГ'], ['СЕТКА'], ['ОРТО'], ['ОТС-ПОЛЯР', 1], ['ПРИВЯЗКА', 1], ['ОТС-ОБЪЕКТ', 1], ['ДПСК', 1], ['ДИН', 1], ['ВЕС'], ['МОДЕЛЬ', 1]].map(([t, on]) => `<button type="button" aria-pressed="${!!on}">${t}</button>`).join('')}
<div class="tray"><cad-icon name="comm"></cad-icon><cad-icon name="unlock"></cad-icon></div>
<button type="button" class="arrow" aria-label="Меню"><svg width="7" height="4"><path d="M0 0h7L3.500 4z"/></svg></button>
<cad-icon name="clean"></cad-icon>
<svg class="size" width="11" height="11" fill="#aca899"><path d="M8 0h2v2H8zM4 4h2v2H4zM8 4h2v2H8zM0 8h2v2H0zM4 8h2v2H4zM8 8h2v2H8z"/></svg>`);

define('cad-window', () => `
<style>
:host{display:flex;flex-direction:column;min-height:100vh;background:#ece9d8}
.frame{flex:1;display:flex;flex-direction:column;min-width:0;border:solid #0a4fe4;border-width:0 3px 4px;border-bottom-color:#0831c9}
.work{flex:1;display:flex;min-height:600px;border-top:1px solid #aca899}
.side{display:flex;flex-direction:column;gap:3px;flex:none;width:25px;border-right:1px solid #aca899}
.side.right{width:28px;border:0;border-left:2px solid #fff}
.center{flex:1;min-width:0;display:flex;flex-direction:column;border-left:2px solid #999686}
.gap{height:6px;border-top:2px solid #fff;border-bottom:1px solid #aca899}
</style>
<cad-title></cad-title>
<div class="frame">
<cad-menu></cad-menu>
<cad-toolbars></cad-toolbars>
<div class="work">
<div class="side"><cad-band vertical>${tools('line xline pline polygon rect arc circle cloud spline ellipse earc insert mkblock point hatch gradient region table mtext')}</cad-band></div>
<div class="center"><cad-drawing></cad-drawing><cad-tabs></cad-tabs></div>
<div class="side right"><cad-band vertical>${tools('erase dup mirror offset array move rotate scale stretch trim extend breakpt break join chamfer fillet explode')}</cad-band>
<cad-band vertical>${tools('front back above under')}</cad-band></div>
</div>
<div class="gap"></div>
<cad-command></cad-command>
<cad-status></cad-status>
</div>`);
</script>
</body>
</html>
